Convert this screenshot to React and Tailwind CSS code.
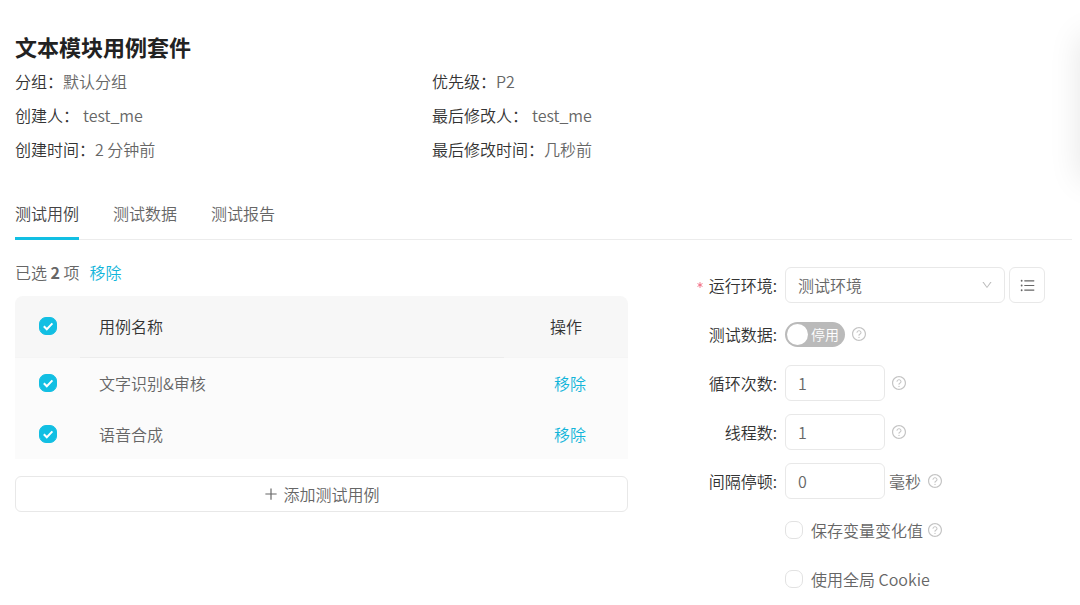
import { useState } from "react";
import {
  AiOutlineDown,
  AiOutlinePlus,
  AiOutlineQuestionCircle,
  AiOutlineUnorderedList,
} from "react-icons/ai";
import { Asterisk } from "lucide-react";

const details = [
  { label: "分组：", value: "默认分组" },
  { label: "优先级：", value: "P2" },
  { label: "创建人：", value: "test_me", spaced: true },
  { label: "最后修改人：", value: "test_me", spaced: true },
  { label: "创建时间：", value: "2 分钟前" },
  { label: "最后修改时间：", value: "几秒前" },
];

const tabs = ["测试用例", "测试数据", "测试报告"];
const cases = ["文字识别&审核", "语音合成"];

function Checkbox({ id, label, checked, onChange }) {
  return (
    <span className="relative inline-flex size-[18px] shrink-0">
      <input
        id={id}
        type="checkbox"
        aria-label={label}
        checked={checked}
        onChange={onChange}
        className="size-[18px] appearance-none rounded-[7px] border border-[#e2e2e2] bg-white checked:border-[#12bfe3] checked:bg-[#12bfe3]"
      />
      {checked && (
        <svg
          viewBox="0 0 18 18"
          className="pointer-events-none absolute inset-0 size-[18px] fill-none stroke-white"
          strokeWidth="2"
        >
          <path d="M4.8 9.2 7.8 12.2 13.4 6.4" />
        </svg>
      )}
    </span>
  );
}

function Help() {
  return (
    <button type="button" aria-label="帮助" className="text-[#c4c4c4]">
      <AiOutlineQuestionCircle className="size-4" />
    </button>
  );
}

function Row({ label, htmlFor, required, children }) {
  return (
    <div className="flex h-9 items-center gap-2">
      <div className="flex w-[114px] shrink-0 items-center justify-end gap-1 text-[#333]">
        {required && <Asterisk className="size-[10px] text-[#f0607a]" strokeWidth={2} />}
        {label && <label htmlFor={htmlFor}>{label}:</label>}
      </div>
      {children}
    </div>
  );
}

function NumberBox({ id, initial }) {
  const [value, setValue] = useState(initial);
  return (
    <input
      id={id}
      type="text"
      inputMode="numeric"
      value={value}
      onChange={(e) => setValue(e.target.value)}
      className="h-9 w-[100px] rounded-md border border-[#e8e8e8] bg-white px-3 text-[#666] outline-none"
    />
  );
}

export default function App() {
  const [tab, setTab] = useState(0);
  const [selected, setSelected] = useState([true, true]);
  const [enabled, setEnabled] = useState(false);
  const [keep, setKeep] = useState(false);
  const [cookie, setCookie] = useState(false);
  const all = selected.every(Boolean);

  return (
    <div className="relative min-h-screen overflow-hidden bg-white pt-[31px] pr-2 pb-2 pl-[15px] font-['Noto_Sans_CJK_SC',sans-serif] text-base leading-6 font-[350] text-[#666]">
      <div className="pointer-events-none absolute top-9 -right-10 h-36 w-10 shadow-[0_0_32px_rgba(0,0,0,0.1)]" />

      <header>
        <h1 className="text-[22px] leading-[30px] font-bold text-[#222]">文本模块用例套件</h1>
        <dl className="mt-[3px] grid grid-cols-[417fr_640fr] leading-[34px]">
          {details.map((d) => (
            <div key={d.label} className="flex">
              <dt className="text-[#333]">{d.label}</dt>
              <dd className={d.spaced ? "pl-1" : ""}>{d.value}</dd>
            </div>
          ))}
        </dl>
      </header>

      <nav className="mt-[22px] flex gap-[34px] border-b border-[#ececec]">
        {tabs.map((t, i) => (
          <button
            key={t}
            type="button"
            onClick={() => setTab(i)}
            className={
              i === tab
                ? "-mb-px h-[52px] border-b-[3px] border-[#12bfe3] text-[#444]"
                : "-mb-px h-[52px] border-b-[3px] border-transparent"
            }
          >
            {t}
          </button>
        ))}
      </nav>

      <main className="grid grid-cols-[613fr_444fr]">
        <section className="pt-5">
          <div className="flex gap-[10px]">
            <span>
              已选 <b>2</b> 项
            </span>
            <button type="button" className="text-[#12b5da]">移除</button>
          </div>

          <table className="mt-3 w-full table-fixed overflow-hidden rounded-t-lg text-left">
            <colgroup>
              <col className="w-[65px]" />
              <col />
              <col className="w-[124px]" />
            </colgroup>
            <thead className="bg-[#f7f7f7] text-[#333]">
              <tr className="h-[61px]">
                <th className="border-b border-[#f5f5f5] text-center align-middle font-normal">
                  <span className="flex justify-center">
                    <Checkbox
                      label="全选"
                      checked={all}
                      onChange={() => setSelected(selected.map(() => !all))}
                    />
                  </span>
                </th>
                <th className="border-b border-[#ececec] pl-[19px] font-[350]">用例名称</th>
                <th className="border-b border-[#f5f5f5] text-center font-[350]">操作</th>
              </tr>
            </thead>
            <tbody className="bg-[#fbfbfb]">
              {cases.map((name, i) => (
                <tr key={name} className="h-[51px]">
                  <td>
                    <span className="flex justify-center">
                      <Checkbox
                        label={name}
                        checked={selected[i]}
                        onChange={() => setSelected(selected.map((s, j) => (j === i ? !s : s)))}
                      />
                    </span>
                  </td>
                  <td className="pl-[19px]">{name}</td>
                  <td className="pl-2 text-center">
                    <button type="button" className="text-[#12b5da]">移除</button>
                  </td>
                </tr>
              ))}
            </tbody>
          </table>

          <button
            type="button"
            className="mt-[17px] flex h-9 w-full items-center justify-center gap-1 rounded-md border border-[#e8e8e8] bg-white"
          >
            <AiOutlinePlus className="size-4" />
            添加测试用例
          </button>
        </section>

        <form className="flex flex-col gap-[13px] pt-[27px] pl-[35px]">
          <Row label="运行环境" htmlFor="env" required>
            <div className="flex gap-1">
              <div className="relative">
                <select
                  id="env"
                  className="h-9 w-[220px] appearance-none rounded-md border border-[#e8e8e8] bg-white pr-8 pl-3 text-[#666] outline-none"
                >
                  <option>测试环境</option>
                </select>
                <AiOutlineDown className="pointer-events-none absolute top-3 right-3 size-3 text-[#bbb]" />
              </div>
              <button
                type="button"
                aria-label="环境列表"
                className="flex size-9 items-center justify-center rounded-md border border-[#e8e8e8] bg-white"
              >
                <AiOutlineUnorderedList className="size-[17px]" />
              </button>
            </div>
          </Row>
          <Row label="测试数据" htmlFor="data">
            <div className="flex items-center gap-1.5">
              <button
                id="data"
                type="button"
                role="switch"
                aria-checked={enabled}
                onClick={() => setEnabled(!enabled)}
                className={
                  enabled
                    ? "flex h-[25px] w-[60px] flex-row-reverse items-center justify-between rounded-full bg-[#12bfe3] pr-[2px] pl-[6px] text-sm text-white"
                    : "flex h-[25px] w-[60px] items-center justify-between rounded-full bg-[#bababa] pr-[6px] pl-[2px] text-sm text-white"
                }
              >
                <span className="size-[21px] rounded-full bg-white" />
                {enabled ? "启用" : "停用"}
              </button>
              <Help />
            </div>
          </Row>
          <Row label="循环次数" htmlFor="loops">
            <div className="flex items-center gap-1.5">
              <NumberBox id="loops" initial="1" />
              <Help />
            </div>
          </Row>
          <Row label="线程数" htmlFor="threads">
            <div className="flex items-center gap-1.5">
              <NumberBox id="threads" initial="1" />
              <Help />
            </div>
          </Row>
          <Row label="间隔停顿" htmlFor="pause">
            <div className="flex items-center gap-1">
              <NumberBox id="pause" initial="0" />
              <div className="flex items-center gap-1.5">
                <span>毫秒</span>
                <Help />
              </div>
            </div>
          </Row>
          <Row>
            <Checkbox id="keep" checked={keep} onChange={() => setKeep(!keep)} />
            <div className="flex items-center gap-1">
              <label htmlFor="keep">保存变量变化值</label>
              <Help />
            </div>
          </Row>
          <Row>
            <Checkbox id="cookie" checked={cookie} onChange={() => setCookie(!cookie)} />
            <label htmlFor="cookie">使用全局 Cookie</label>
          </Row>
        </form>
      </main>
    </div>
  );
}
